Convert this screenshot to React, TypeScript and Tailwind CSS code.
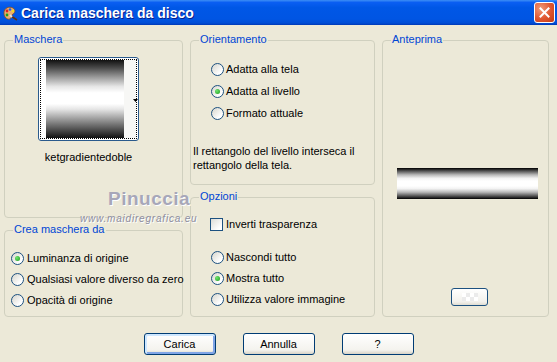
import React from "react";

function Radio({ checked }: { checked?: boolean }) {
  return (
    <span className="flex h-[13px] w-[13px] shrink-0 items-center justify-center rounded-full border border-[#1c5180] bg-[linear-gradient(135deg,#d6d5cc,#ffffff_75%)]">
      {checked && (
        <span className="h-[5px] w-[5px] rounded-full bg-[radial-gradient(circle_at_35%_35%,#6fe56f,#1b9a1b)]" />
      )}
    </span>
  );
}

function Checkbox() {
  return (
    <span className="h-[13px] w-[13px] shrink-0 border border-[#1c5180] bg-[linear-gradient(135deg,#dcdcd7,#ffffff_80%)]" />
  );
}

function Group({
  title,
  className,
  children,
}: {
  title: string;
  className: string;
  children?: React.ReactNode;
}) {
  return (
    <div className={"relative rounded-[4px] border border-[#d0d0bf] " + className}>
      <span className="absolute left-[8px] top-[-8px] bg-[#ece9d8] px-[1px] text-[11px] leading-[13px] text-[#0046d5]">
        {title}
      </span>
      {children}
    </div>
  );
}

function Option({
  label,
  checked,
  h,
  gap,
}: {
  label: string;
  checked?: boolean;
  h: string;
  gap: string;
}) {
  return (
    <div className={"flex items-center whitespace-nowrap " + h + " " + gap}>
      <Radio checked={checked} />
      <span className="text-[11px] leading-[13px]">{label}</span>
    </div>
  );
}

function XpButton({ label, def }: { label: string; def?: boolean }) {
  return (
    <div
      className={
        "flex h-[22px] w-[72px] items-center justify-center rounded-[3px] border border-[#003c74] bg-[linear-gradient(#ffffff,#f4f3ee_80%,#d8d3c6)] text-[11px] leading-[13px] text-black " +
        (def
          ? "shadow-[inset_1px_1px_0_1px_#cee7ff,inset_-1px_-1px_0_1px_#7fa4e6]"
          : "")
      }
    >
      {label}
    </div>
  );
}

function TitleIcon() {
  return (
    <svg width="16" height="16" viewBox="0 0 16 16">
      <path d="M2 8 C2 3 7 1 11 3 C14 5 13 8 11 9 C9 10 10 12 8 14 C5 15 2 12 2 8 Z" fill="#e8b070" stroke="#8a4a1a" strokeWidth="0.8" />
      <circle cx="5" cy="6" r="1.4" fill="#e02020" />
      <circle cx="8" cy="4.5" r="1.3" fill="#2060e0" />
      <circle cx="5" cy="10" r="1.4" fill="#20a020" />
      <circle cx="11" cy="6" r="1.2" fill="#f0e020" />
      <path d="M9 11 L15 15" stroke="#603010" strokeWidth="1.6" />
      <path d="M8 10 L10 12" stroke="#e0e0e0" strokeWidth="2" />
    </svg>
  );
}

export default function App() {
  return (
    <div className="relative h-[362px] w-[557px] overflow-hidden bg-[#ece9d8] font-['Liberation_Sans',Arial,sans-serif] text-black">
      {/* Title bar */}
      <div className="flex h-[25px] items-center bg-[linear-gradient(#3d8ef5_0%,#0a5ef2_10%,#0057e6_30%,#0055e3_75%,#004ed6_92%,#0038b5_100%)] pl-[2px] pr-[2px]">
        <TitleIcon />
        <span className="ml-[3px] text-[14px] font-bold leading-[16px] text-white [text-shadow:1px_1px_0_#0a1e8c]">
          Carica maschera da disco
        </span>
        <div className="ml-auto flex h-[21px] w-[21px] items-center justify-center rounded-[3px] border border-white bg-[radial-gradient(circle_at_30%_30%,#f09a78,#e0552f_55%,#c13b14)]">
          <svg width="11" height="11" viewBox="0 0 11 11">
            <path d="M1.5 1.5 L9.5 9.5 M9.5 1.5 L1.5 9.5" stroke="white" strokeWidth="2" strokeLinecap="square" />
          </svg>
        </div>
      </div>

      {/* Body */}
      <div className="flex gap-[7px] pl-[4px] pt-[15px]">
        <div className="flex w-[179px] flex-col gap-[12px]">
          <Group title="Maschera" className="h-[178px]">
            <div className="ml-[33px] flex w-[101px] flex-col items-center pt-[16px]">
              <div className="relative h-[84px] w-[101px] rounded-[3px] border border-[#2a5a8c] bg-white p-[1px]">
                <div className="flex h-full w-full border border-dotted border-black bg-white">
                  <div className="ml-[5px] h-full w-[78px] bg-[linear-gradient(#111111_0%,#4a4a4a_10%,#9a9a9a_22%,#e6e6e6_34%,#ffffff_42%,#ffffff_56%,#e6e6e6_63%,#9a9a9a_76%,#4a4a4a_90%,#111111_100%)]" />
                  <div className="h-full w-[12px] bg-[#f7f7f5]" />
                </div>
                <svg className="absolute left-[94px] top-[41px]" width="5" height="3" viewBox="0 0 5 3">
                  <path d="M0 0 H5 L2.5 3 Z" fill="black" />
                </svg>
              </div>
              <span className="mt-[10px] whitespace-nowrap text-[11px] leading-[13px]">ketgradientedoble</span>
            </div>
          </Group>
          <Group title="Crea maschera da" className="h-[87px]">
            <div className="flex flex-col pl-[6px] pt-[17px]">
              <Option h="h-[21px]" gap="gap-[3px]" label="Luminanza di origine" checked />
              <Option h="h-[21px]" gap="gap-[3px]" label="Qualsiasi valore diverso da zero" />
              <Option h="h-[21px]" gap="gap-[3px]" label="Opacità di origine" />
            </div>
          </Group>
        </div>

        <div className="flex w-[185px] flex-col gap-[12px]">
          <Group title="Orientamento" className="h-[145px]">
            <div className="flex flex-col pl-[20px] pt-[17px]">
              <Option h="h-[22px]" gap="gap-[2px]" label="Adatta alla tela" />
              <Option h="h-[22px]" gap="gap-[2px]" label="Adatta al livello" checked />
              <Option h="h-[22px]" gap="gap-[2px]" label="Formato attuale" />
            </div>
            <p className="mt-[20px] whitespace-nowrap pl-[2px] text-[11px] leading-[14px]">
              Il rettangolo del livello interseca il
              <br />
              rettangolo della tela.
            </p>
          </Group>
          <Group title="Opzioni" className="h-[120px]">
            <div className="flex flex-col pt-[16px]">
              <div className="flex h-[21px] items-center gap-[3px] pl-[19px]">
                <Checkbox />
                <span className="text-[11px] leading-[13px]">Inverti trasparenza</span>
              </div>
              <div className="mt-[12px] flex flex-col pl-[20px]">
                <Option h="h-[21px]" gap="gap-[2px]" label="Nascondi tutto" />
                <Option h="h-[21px]" gap="gap-[2px]" label="Mostra tutto" checked />
                <Option h="h-[21px]" gap="gap-[2px]" label="Utilizza valore immagine" />
              </div>
            </div>
          </Group>
        </div>

        <Group title="Anteprima" className="h-[277px] w-[167px]">
          <div className="flex flex-col pl-[14px] pt-[127px]">
            <div className="h-[31px] w-[141px] bg-[linear-gradient(#000000_0%,#555555_10%,#b8b8b8_22%,#f2f2f2_33%,#ffffff_42%,#ffffff_58%,#f2f2f2_67%,#b8b8b8_78%,#555555_90%,#000000_100%)]" />
            <div className="ml-[54px] mt-[89px] flex h-[18px] w-[37px] items-center justify-center rounded-[3px] border border-[#1c5180] bg-[linear-gradient(#ffffff,#f2f1ec_80%,#e0ddd2)]">
              <div className="h-[8px] w-[16px] bg-[repeating-conic-gradient(#ebebeb_0%_25%,#ffffff_0%_50%)] bg-[length:8px_8px]" />
            </div>
          </div>
        </Group>
      </div>

      {/* Buttons */}
      <div className="mt-[16px] flex justify-center gap-[27px]">
        <XpButton label="Carica" def />
        <XpButton label="Annulla" />
        <XpButton label="?" />
      </div>

      {/* Watermark */}
      <span className="absolute left-[108px] top-[189px] text-[19px] font-bold leading-[20px] tracking-[0.5px] text-[#a7a7b9] [text-shadow:1px_1px_0_#ffffff]">
        Pinuccia
      </span>
      <span className="absolute left-[80px] top-[213px] text-[10px] italic leading-[12px] tracking-[0.8px] text-[#8e8ea0] [text-shadow:1px_1px_0_#ffffff]">
        www.maidiregrafica.eu
      </span>
    </div>
  );
}
